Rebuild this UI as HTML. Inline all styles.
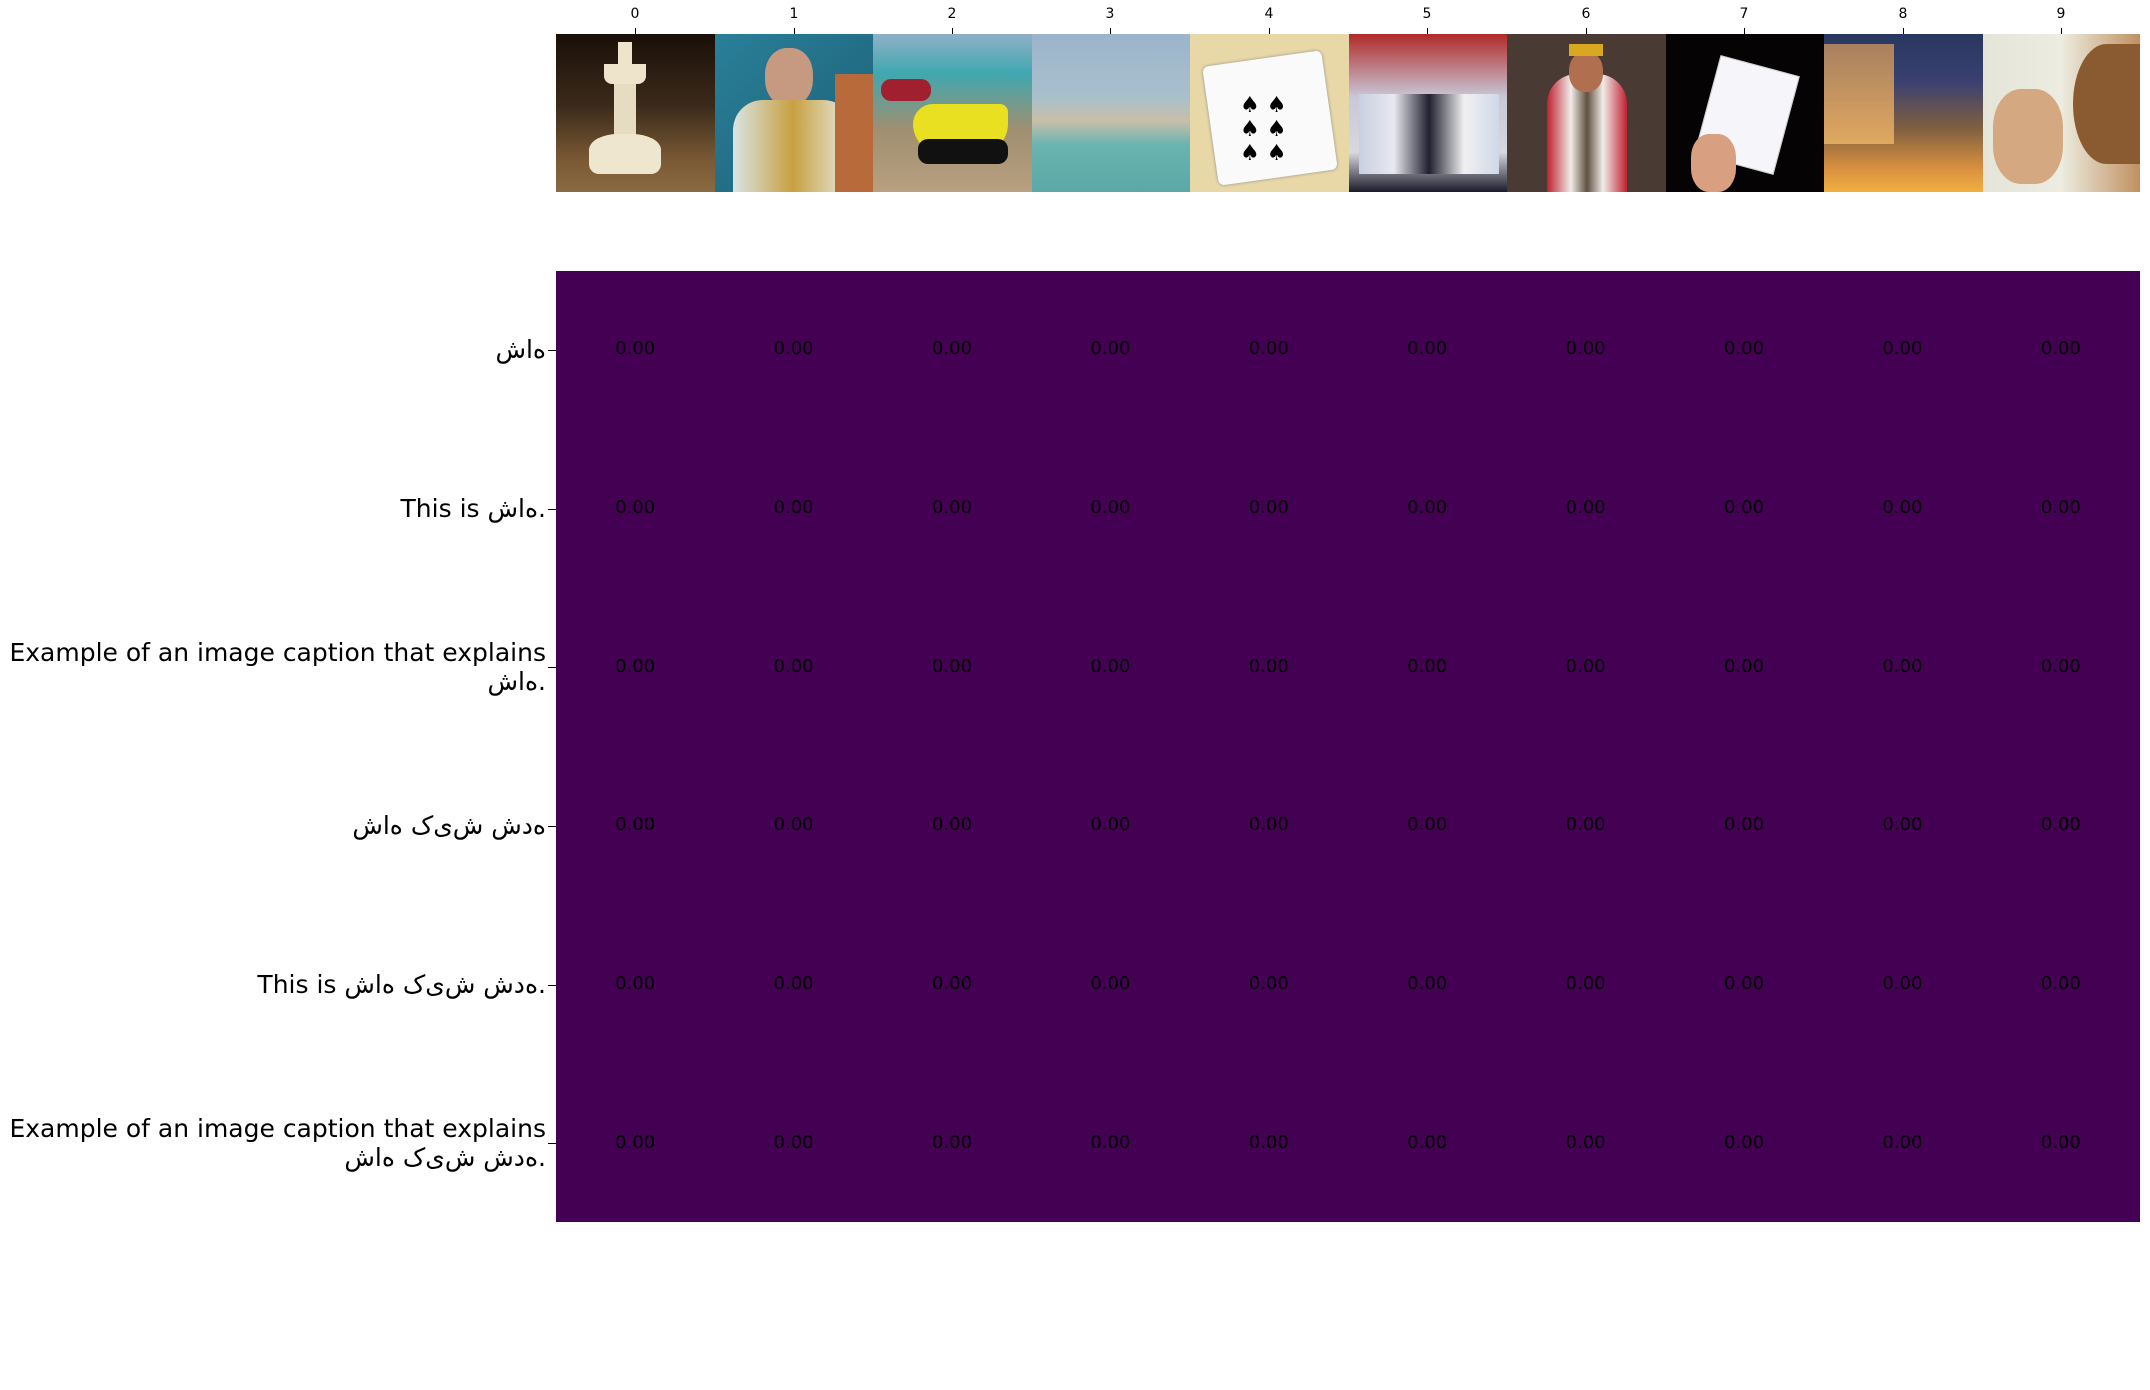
<!DOCTYPE html>
<html><head><meta charset="utf-8"><style>
body{margin:0;width:2150px;height:1390px;background:#fff;position:relative;overflow:hidden;font-family:"DejaVu Sans","Liberation Sans",sans-serif;}
.a{position:absolute}
.xt{position:absolute;top:6px;font-size:14px;width:40px;margin-left:-20px;text-align:center;color:#000}
.xm{position:absolute;top:28px;width:1px;height:6px;background:#000}
.img{position:absolute;top:34px;height:158px;width:159px;overflow:hidden}
.hm{position:absolute;left:556px;top:271px;width:1584px;height:954px;background:#440154}
.v{position:absolute;font-size:18px;color:#000;width:80px;margin-left:-40px;text-align:center;line-height:20px}
.yl{position:absolute;right:1604px;font-size:25px;line-height:29px;text-align:right;color:#000;white-space:nowrap}
.ym{position:absolute;left:548px;width:8px;height:1px;background:#000}
.ar{unicode-bidi:bidi-override;direction:ltr}
</style></head><body>
<div class="xt" style="left:635px">0</div><div class="xm" style="left:635px"></div>
<div class="xt" style="left:794px">1</div><div class="xm" style="left:794px"></div>
<div class="xt" style="left:952px">2</div><div class="xm" style="left:952px"></div>
<div class="xt" style="left:1110px">3</div><div class="xm" style="left:1110px"></div>
<div class="xt" style="left:1269px">4</div><div class="xm" style="left:1269px"></div>
<div class="xt" style="left:1427px">5</div><div class="xm" style="left:1427px"></div>
<div class="xt" style="left:1586px">6</div><div class="xm" style="left:1586px"></div>
<div class="xt" style="left:1744px">7</div><div class="xm" style="left:1744px"></div>
<div class="xt" style="left:1903px">8</div><div class="xm" style="left:1903px"></div>
<div class="xt" style="left:2061px">9</div><div class="xm" style="left:2061px"></div>

<div class="img" style="left:556px;background:linear-gradient(180deg,#1a0f08 0%,#3a2a1a 45%,#7a5a35 80%,#8a6a40 100%)">
 <div class="a" style="left:62px;top:8px;width:14px;height:26px;background:#eee4cc"></div>
 <div class="a" style="left:48px;top:30px;width:42px;height:20px;background:#eee4cc;border-radius:0 0 8px 8px"></div>
 <div class="a" style="left:58px;top:50px;width:22px;height:60px;background:#e6dcc2"></div>
 <div class="a" style="left:33px;top:100px;width:72px;height:40px;background:#efe6d0;border-radius:40% 40% 10px 10px"></div></div>
<div class="img" style="left:715px;background:linear-gradient(135deg,#2a7f98,#1c5f78)">
 <div class="a" style="left:50px;top:14px;width:48px;height:58px;background:#c69a80;border-radius:45%"></div>
 <div class="a" style="left:18px;top:66px;width:120px;height:92px;background:linear-gradient(90deg,#d8e4e4,#c8a040 50%,#e8eee8);border-radius:30px 30px 0 0"></div>
 <div class="a" style="left:120px;top:40px;width:39px;height:118px;background:#b86a3a"></div></div>
<div class="img" style="left:873px;background:linear-gradient(180deg,#8fb0c8 0%,#3fa8b0 25%,#a08f70 60%,#b8a080 100%)">
 <div class="a" style="left:40px;top:70px;width:95px;height:50px;background:#e8e020;border-radius:20px 8px 30px 30px"></div>
 <div class="a" style="left:45px;top:105px;width:90px;height:25px;background:#111;border-radius:10px"></div>
 <div class="a" style="left:8px;top:45px;width:50px;height:22px;background:#a02030;border-radius:10px"></div></div>
<div class="img" style="left:1032px;background:linear-gradient(180deg,#9cb4cc 0%,#a8c0cc 40%,#c8bfa8 55%,#6ab4b0 70%,#5aa8a8 100%)"></div>
<div class="img" style="left:1190px;background:#e8d8a8">
 <div class="a" style="left:20px;top:24px;width:120px;height:120px;background:#fafafa;transform:rotate(-8deg);border-radius:6px;box-shadow:0 0 3px #888"></div>
 <div class="a" style="left:50px;top:60px;font-size:22px;line-height:24px;color:#000">♠ ♠<br>♠ ♠<br>♠ ♠</div></div>
<div class="img" style="left:1349px;background:linear-gradient(180deg,#b02a28 0%,#c8c8d8 40%,#d8d8e0 75%,#1a1a2a 100%)">
 <div class="a" style="left:10px;top:60px;width:140px;height:80px;background:linear-gradient(90deg,#c8d0e0,#e8e8f0,#202030,#f0f0f0,#d0d8e8)"></div></div>
<div class="img" style="left:1507px;background:#4a3a34">
 <div class="a" style="left:40px;top:40px;width:80px;height:118px;background:linear-gradient(90deg,#c02030,#f0ece8 30%,#605040 50%,#f0ece8 70%,#c02030);border-radius:30px 30px 0 0"></div>
 <div class="a" style="left:62px;top:18px;width:34px;height:40px;background:#b07050;border-radius:45%"></div>
 <div class="a" style="left:62px;top:10px;width:34px;height:12px;background:#d8a820"></div></div>
<div class="img" style="left:1666px;background:#050303">
 <div class="a" style="left:40px;top:30px;width:80px;height:100px;background:#f6f6fa;transform:rotate(15deg);border:1px solid #ccc"></div>
 <div class="a" style="left:25px;top:100px;width:45px;height:58px;background:#d8a080;border-radius:40%"></div></div>
<div class="img" style="left:1824px;background:linear-gradient(180deg,#283860 0%,#3a4070 30%,#806040 60%,#d89040 85%,#f0b040 100%)">
 <div class="a" style="left:0;top:10px;width:70px;height:100px;background:linear-gradient(180deg,#a88060,#e0a860)"></div></div>
<div class="img" style="left:1983px;width:157px;background:linear-gradient(90deg,#e4e4d8,#ecece0 50%,#c09060)">
 <div class="a" style="left:10px;top:55px;width:70px;height:95px;background:#d4a880;border-radius:40%"></div>
 <div class="a" style="left:90px;top:10px;width:67px;height:120px;background:#8a5a30;border-radius:50% 0 0 50%"></div></div>

<div class="hm" style="height:951px"></div>

<div class="yl ar" style="top:335px">ﺵﺍﻩ</div><div class="ym" style="top:350px"></div>
<div class="yl" style="top:494px">This is <span class="ar">ﺵﺍﻩ</span>.</div><div class="ym" style="top:509px"></div>
<div class="yl" style="top:638px">Example of an image caption that explains<br><span class="ar">ﺵﺍﻩ</span>.</div><div class="ym" style="top:667px"></div>
<div class="yl ar" style="top:811px">ﺵﺍﻩ ﮎﯼﺵ ﺵﺩﻩ</div><div class="ym" style="top:826px"></div>
<div class="yl" style="top:970px">This is <span class="ar">ﺵﺍﻩ ﮎﯼﺵ ﺵﺩﻩ</span>.</div><div class="ym" style="top:985px"></div>
<div class="yl" style="top:1114px">Example of an image caption that explains<br><span class="ar">ﺵﺍﻩ ﮎﯼﺵ ﺵﺩﻩ</span>.</div><div class="ym" style="top:1143px"></div>

<div id="vals"></div>
<script>
var h='';
for(var j=0;j<6;j++)for(var i=0;i<10;i++){h+='<div class="v" style="left:'+(635.2+158.4*i)+'px;top:'+(339+158.8*j)+'px">0.00</div>';}
document.getElementById('vals').innerHTML=h;
</script>
</body></html>
